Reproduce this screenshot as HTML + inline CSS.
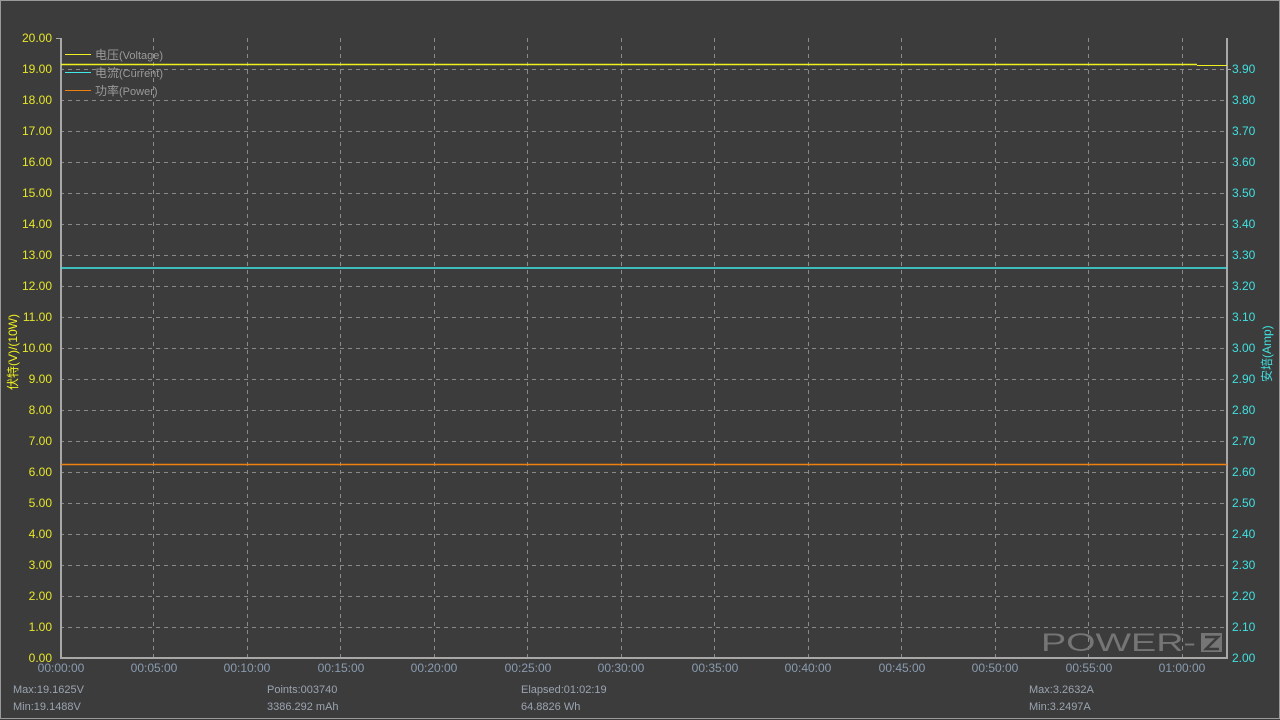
<!DOCTYPE html>
<html><head><meta charset="utf-8"><style>
html,body{margin:0;padding:0;background:#3c3c3c;width:1280px;height:720px;overflow:hidden}
svg{display:block}
text{font-family:"Liberation Sans","Noto Sans CJK SC",sans-serif;font-size:12px}
</style></head><body>
<svg width="1280" height="720" viewBox="0 0 1280 720">
<rect x="0" y="0" width="1280" height="720" fill="#3c3c3c"/>
<rect x="0.5" y="0.5" width="1279" height="718" fill="none" stroke="#9a9a9a" stroke-width="1"/>
<g stroke="#8a8a8a" stroke-width="1" stroke-dasharray="4,4">
<line x1="60" y1="69.5" x2="1227" y2="69.5"/><line x1="60" y1="100.5" x2="1227" y2="100.5"/><line x1="60" y1="131.5" x2="1227" y2="131.5"/><line x1="60" y1="162.5" x2="1227" y2="162.5"/><line x1="60" y1="193.5" x2="1227" y2="193.5"/><line x1="60" y1="224.5" x2="1227" y2="224.5"/><line x1="60" y1="255.5" x2="1227" y2="255.5"/><line x1="60" y1="286.5" x2="1227" y2="286.5"/><line x1="60" y1="317.5" x2="1227" y2="317.5"/><line x1="60" y1="348.5" x2="1227" y2="348.5"/><line x1="60" y1="379.5" x2="1227" y2="379.5"/><line x1="60" y1="410.5" x2="1227" y2="410.5"/><line x1="60" y1="441.5" x2="1227" y2="441.5"/><line x1="60" y1="472.5" x2="1227" y2="472.5"/><line x1="60" y1="503.5" x2="1227" y2="503.5"/><line x1="60" y1="534.5" x2="1227" y2="534.5"/><line x1="60" y1="565.5" x2="1227" y2="565.5"/><line x1="60" y1="596.5" x2="1227" y2="596.5"/><line x1="60" y1="627.5" x2="1227" y2="627.5"/>
<line x1="153.5" y1="38" x2="153.5" y2="658"/><line x1="247.5" y1="38" x2="247.5" y2="658"/><line x1="340.5" y1="38" x2="340.5" y2="658"/><line x1="434.5" y1="38" x2="434.5" y2="658"/><line x1="527.5" y1="38" x2="527.5" y2="658"/><line x1="621.5" y1="38" x2="621.5" y2="658"/><line x1="714.5" y1="38" x2="714.5" y2="658"/><line x1="808.5" y1="38" x2="808.5" y2="658"/><line x1="901.5" y1="38" x2="901.5" y2="658"/><line x1="995.5" y1="38" x2="995.5" y2="658"/><line x1="1088.5" y1="38" x2="1088.5" y2="658"/><line x1="1182.5" y1="38" x2="1182.5" y2="658"/>
</g>
<g stroke="#a8a8a8" stroke-width="2" fill="none">
<polyline points="61,38 61,658 1227,658 1227,38"/>
</g>
<g stroke="#a8a8a8" stroke-width="1">
<line x1="56" y1="38.5" x2="61" y2="38.5"/><line x1="1227" y1="69.5" x2="1231" y2="69.5"/>
</g>
<!-- watermark -->
<text x="1041" y="651" fill="#757575" textLength="155" lengthAdjust="spacingAndGlyphs" style="font-size:25px">POWER-</text>
<rect x="1201" y="633" width="21" height="19" fill="#757575"/>
<path d="M1205 637 H1218 L1206 649 H1219" stroke="#3c3c3c" stroke-width="2.5" fill="none"/>
<!-- data lines -->
<line x1="61" y1="64.5" x2="1197" y2="64.5" stroke="#f0f020" stroke-width="1.5"/>
<line x1="1197" y1="65.5" x2="1227" y2="65.5" stroke="#f0f020" stroke-width="1"/>
<line x1="61" y1="268" x2="1227" y2="268" stroke="#40e8e8" stroke-width="1.5"/>
<line x1="61" y1="464.5" x2="1227" y2="464.5" stroke="#f08010" stroke-width="1.5"/>
<!-- legend -->
<line x1="65" y1="54.5" x2="91" y2="54.5" stroke="#f0f020" stroke-width="1"/>
<line x1="65" y1="72.5" x2="91" y2="72.5" stroke="#40e8e8" stroke-width="1"/>
<line x1="65" y1="90.5" x2="91" y2="90.5" stroke="#f08010" stroke-width="1"/>
<g fill="#9a9a9a"><text x="95" y="59">电压<tspan style="font-size:11px">(Voltage)</tspan></text>
<text x="95" y="77">电流<tspan style="font-size:11px">(Current)</tspan></text>
<text x="95" y="95">功率<tspan style="font-size:11px">(Power)</tspan></text></g>
<!-- left labels -->
<g fill="#e6e628" text-anchor="end">
<text x="52" y="662">0.00</text><text x="52" y="631">1.00</text><text x="52" y="600">2.00</text><text x="52" y="569">3.00</text><text x="52" y="538">4.00</text><text x="52" y="507">5.00</text><text x="52" y="476">6.00</text><text x="52" y="445">7.00</text><text x="52" y="414">8.00</text><text x="52" y="383">9.00</text><text x="52" y="352">10.00</text><text x="52" y="321">11.00</text><text x="52" y="290">12.00</text><text x="52" y="259">13.00</text><text x="52" y="228">14.00</text><text x="52" y="197">15.00</text><text x="52" y="166">16.00</text><text x="52" y="135">17.00</text><text x="52" y="104">18.00</text><text x="52" y="73">19.00</text><text x="52" y="42">20.00</text>
</g>
<text transform="translate(17,390) rotate(-90)" fill="#f0f020">伏特(V)/(10W)</text>
<!-- right labels -->
<g fill="#40e0e0">
<text x="1232" y="662">2.00</text><text x="1232" y="631">2.10</text><text x="1232" y="600">2.20</text><text x="1232" y="569">2.30</text><text x="1232" y="538">2.40</text><text x="1232" y="507">2.50</text><text x="1232" y="476">2.60</text><text x="1232" y="445">2.70</text><text x="1232" y="414">2.80</text><text x="1232" y="383">2.90</text><text x="1232" y="352">3.00</text><text x="1232" y="321">3.10</text><text x="1232" y="290">3.20</text><text x="1232" y="259">3.30</text><text x="1232" y="228">3.40</text><text x="1232" y="197">3.50</text><text x="1232" y="166">3.60</text><text x="1232" y="135">3.70</text><text x="1232" y="104">3.80</text><text x="1232" y="73">3.90</text>
</g>
<text transform="translate(1271,382) rotate(-90)" fill="#40e0e0">安培(Amp)</text>
<!-- x labels -->
<g fill="#8a9cb0" text-anchor="middle">
<text x="61" y="672">00:00:00</text><text x="154" y="672">00:05:00</text><text x="247" y="672">00:10:00</text><text x="341" y="672">00:15:00</text><text x="434" y="672">00:20:00</text><text x="528" y="672">00:25:00</text><text x="621" y="672">00:30:00</text><text x="715" y="672">00:35:00</text><text x="808" y="672">00:40:00</text><text x="902" y="672">00:45:00</text><text x="995" y="672">00:50:00</text><text x="1089" y="672">00:55:00</text><text x="1182" y="672">01:00:00</text>
</g>
<g fill="#9aa4b0">
<text x="13" y="693" style="font-size:11px">Max:19.1625V</text><text x="13" y="710" style="font-size:11px">Min:19.1488V</text>
<text x="267" y="693" style="font-size:11px">Points:003740</text><text x="267" y="710" style="font-size:11px">3386.292 mAh</text>
<text x="521" y="693" style="font-size:11px">Elapsed:01:02:19</text><text x="521" y="710" style="font-size:11px">64.8826 Wh</text>
<text x="1029" y="693" style="font-size:11px">Max:3.2632A</text><text x="1029" y="710" style="font-size:11px">Min:3.2497A</text>
</g>
</svg>
</body></html>
